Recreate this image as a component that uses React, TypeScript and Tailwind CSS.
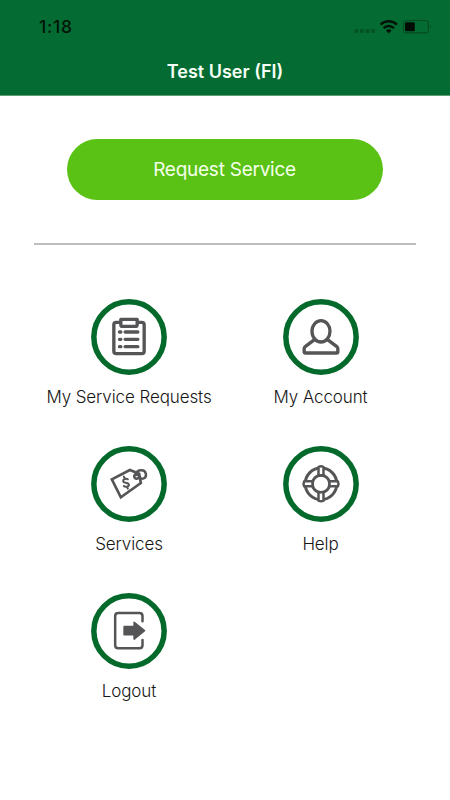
import type { ReactNode } from "react";

function StatusBar() {
  return (
    <div className="flex h-[54px] items-center justify-between pl-[39px] pr-[18px]">
      <span className="text-[17.5px] font-medium leading-5 tracking-[0.7px] text-[#021407]">1:18</span>
      <svg width="78" height="16" viewBox="0 0 78 16" className="block">
        <g fill="#035325">
          <rect x="0.5" y="10" width="4" height="4" rx="1" />
          <rect x="6" y="10" width="4" height="4" rx="1" />
          <rect x="11.5" y="10" width="4" height="4" rx="1" />
          <rect x="17" y="10" width="4" height="4" rx="1" />
        </g>
        <g fill="none" stroke="#021407" strokeWidth="2.6">
          <path d="M26.6 5.6a11.6 11.6 0 0 1 16.3 0" />
          <path d="M29.6 9.1a7.3 7.3 0 0 1 10.3 0" />
        </g>
        <path d="M31.9 11.4a3.9 3.9 0 0 1 5.7 0L34.75 14.4z" fill="#021407" />
        <rect x="49.4" y="1.5" width="25" height="12.4" rx="3.2" fill="none" stroke="#034b20" strokeWidth="1.1" />
        <rect x="51" y="3.2" width="9.8" height="9" rx="1.2" fill="#010d04" />
        <path d="M76 5.6q1.7 2.1 0 4.2z" fill="#034b20" />
      </svg>
    </div>
  );
}

function MenuItem({ label, children }: { label: string; children: ReactNode }) {
  return (
    <button className="flex h-[147px] flex-col items-center">
      <svg viewBox="22.5 21 228 228" className="size-[76px] shrink-0" fill="none" stroke="#555557" strokeWidth="10" strokeLinejoin="round" strokeLinecap="round">
        <circle cx="136.5" cy="135" r="105.5" stroke="#046a2b" strokeWidth="16.5" />
        {children}
      </svg>
      <span className="mt-[10px] whitespace-nowrap text-[17px] font-light leading-6 tracking-[-0.1px] text-[#161616]">{label}</span>
    </button>
  );
}

export default function App() {
  return (
    <main className="min-h-[800px] w-full bg-white font-['Inter','Liberation_Sans',sans-serif]">
      <header className="h-24 border-b border-[#5f9d76] bg-[#046c32]">
        <StatusBar />
        <h1 className="pt-[6px] text-center text-[18px] font-semibold leading-6 text-[#f5fff5]">Test User (FI)</h1>
      </header>
      <div className="flex justify-center pt-[43px]">
        <button className="h-[61px] w-[316px] rounded-full bg-[#5ac215] pr-px pt-px text-[19px] font-normal tracking-[-0.25px] text-[#f4ffeb]">Request Service</button>
      </div>
      <hr className="mx-[34px] mt-[43px] border-t-2 border-[#bcbebd]" />
      <nav className="ml-[33px] mr-[34px] mt-[54px] grid grid-cols-[192px_191px]">
        <MenuItem label="My Service Requests">
          <path d="M109 91H98q-7 0-7 7v80q0 7 7 7h77q7 0 7-7V98q0-7-7-7h-11" />
          <path d="M112 82h49v16q0 5-5 5h-39q-5 0-5-5z" />
          <path d="M108 120h4M125 120h38M108 142h4M125 142h38M108 164h4M125 164h38" />
        </MenuItem>
        <MenuItem label="My Account">
          <ellipse cx="136.5" cy="118" rx="27" ry="32" />
          <path d="M117 143 89 164q-3 2-3 6v9q0 4 4 4h93q4 0 4-4v-9q0-4-3-6l-28-21" />
        </MenuItem>
        <MenuItem label="Services">
          <path strokeWidth="8" strokeLinejoin="miter" d="m85 121 54-28 28 11 5 28-60 43z" />
          <path strokeWidth="7.5" d="M166 111a7 7 0 1 0-2 6M158 108c0-18 26-18 29-4 3 13-11 20-20 11" />
          <path strokeWidth="6" d="M133 121c-5-4-15-1-14 6 1 6 15 2 17 9 1 7-10 10-15 5M123 117l-2-4M131 145l2 4" />
        </MenuItem>
        <MenuItem label="Help">
          <circle cx="136.5" cy="134.5" r="47.5" strokeWidth="9" />
          <circle cx="136.5" cy="134.5" r="26" strokeWidth="9" />
          <g fill="white" strokeWidth="7.5">
            <path d="M129 84q7.5-4 15 0v25h-15zM129 160h15v25q-7.5 4-15 0zM86 127h25v15H86q-4-7.5 0-15zM162 127h25q4 7.5 0 15h-25z" />
          </g>
        </MenuItem>
        <MenuItem label="Logout">
          <path strokeWidth="7.5" d="M177 106V90q0-9-9-9h-64q-9 0-9 9v88q0 9 9 9h64q9 0 9-9v-16" />
          <path d="M122 122h30v-13l31 25-31 25v-13h-30z" fill="#555557" strokeWidth="5" />
        </MenuItem>
      </nav>
    </main>
  );
}
